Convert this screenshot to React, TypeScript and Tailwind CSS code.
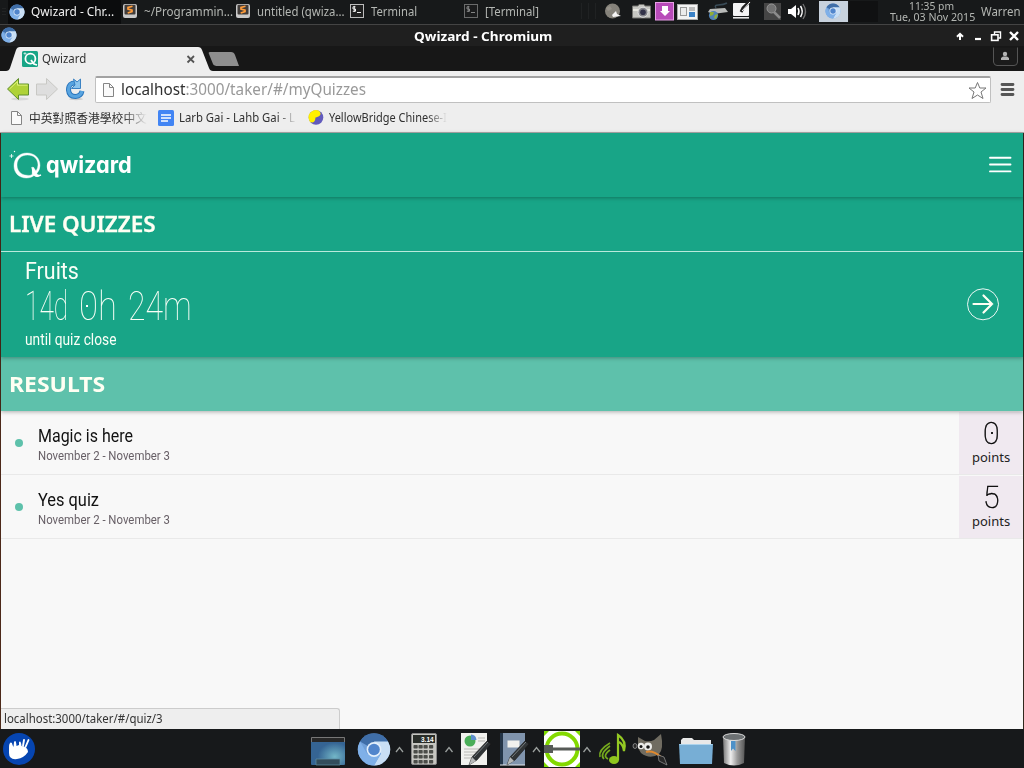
import { useLayoutEffect, useRef, type ReactNode } from "react";

/* One line of text, condensed or widened to fill its box. */
function Fit({ className = "", children }: { className?: string; children: ReactNode }) {
  const box = useRef<HTMLDivElement>(null);
  const ink = useRef<HTMLSpanElement>(null);
  useLayoutEffect(() => {
    if (!box.current || !ink.current) return;
    ink.current.style.transform = `scaleX(${box.current.clientWidth / ink.current.offsetWidth})`;
  });
  return (
    <div ref={box} className={"shrink-0 whitespace-nowrap " + className}>
      <span ref={ink} className="inline-block origin-left">{children}</span>
    </div>
  );
}

function Pic({ x, y, w, h, children }: { x: number; y: number; w: number; h: number; children?: ReactNode }) {
  return (
    <svg className="block shrink-0" width={w} height={h} viewBox={`${x} ${y} ${w} ${h}`} fill="none">
      {children}
    </svg>
  );
}

function Chromium({ cx, cy, r }: { cx: number; cy: number; r: number }) {
  return (
    <g transform={`translate(${cx} ${cy}) scale(${r / 16})`}>
      <circle r="16" fill="#6f9fd8" />
      <path d="M0 0L-14-8A16 16 0 0 1 14-8Z" fill="#3f6ea8" />
      <path d="M0-8H14A16 16 0 0 1 0 16L7 4Z" fill="#c9dff5" />
      <path d="M-14-8A16 16 0 0 0 0 16L7 4L-7 4Z" fill="#7fb0e8" />
      <circle r="7.4" fill="#e3effb" />
      <circle r="5.8" fill="#5085cc" />
    </g>
  );
}

function Sublime({ x }: { x: number }) {
  return (
    <g>
      <rect x={x} y="4" width="14" height="14" rx="2" fill="#c9c9c9" />
      <rect x={x + 1.5} y="4.8" width="11" height="9.7" rx="1" fill="#413c39" />
      <path d={`M${x + 9.5} 6.3L${x + 5} 7.5V9L${x + 9} 10.2V11.6L${x + 4.7} 13`} stroke="#ff9d3c" strokeWidth="1.7" />
    </g>
  );
}

function Term({ x, dim }: { x: number; dim?: boolean }) {
  return (
    <g opacity={dim ? 0.5 : 1}>
      <rect x={x + 0.5} y="4.5" width="13" height="13" fill="#202020" stroke="#bcbcbc" />
      <path d={`M${x + 5.5} 6.8H${x + 3}V9H${x + 5.5}V11.3H${x + 2.8}M${x + 4.3} 5.9V12M${x + 7} 12.5H${x + 11}`} stroke="#eee" />
    </g>
  );
}

function Page({ x, y }: { x: number; y: number }) {
  return (
    <g transform={`translate(${x} ${y})`}>
      <path d="M.5.5H6.5L10.5 4.5V13.5H.5Z" fill="#fafafa" stroke="#858585" />
      <path d="M6.5.5V4.5H10.5" stroke="#858585" />
    </g>
  );
}

const Caret = ({ x }: { x: number }) => <path d={`M${x} 752L${x + 3.5} 747.5L${x + 7} 752`} stroke="#9ba09e" strokeWidth="1.3" />;

function Pen({ x }: { x: number }) {
  return (
    <g transform={`translate(${x} 0)`}>
      <path d="M8 765L11 757L26 741L30 744L16 760Z" fill="#303436" stroke="#171717" strokeWidth=".6" />
      <path d="M8 765L11 757L15 761Z" fill="#b6b8b8" />
      <path d="M13 757L27 742" stroke="#777d80" />
    </g>
  );
}

function TopPanel() {
  const label = "text-[12px] leading-[24px] text-[#b4b7b3] ";
  return (
    <div className="flex h-[24px] bg-[#17191a]">
      <div className="flex w-[121px] bg-[#0b0c0d]">
        <Pic x={0} y={0} w={31} h={24}>
          <rect width="8" height="24" fill="#17191a" />
          <path d="M3 8V17M5 8V17" stroke="#2c2e2f" strokeDasharray="1 2" />
          <Chromium cx={17} cy={12} r={7.5} />
        </Pic>
        <Fit className="w-[83px] text-[12px] leading-[24px] text-[#f2f2f2]">Qwizard - Chr...</Fit>
      </div>
      <Pic x={121} y={0} w={23} h={24}><Sublime x={123} /></Pic>
      <Fit className={label + "w-[89px]"}>~/Programmin...</Fit>
      <Pic x={233} y={0} w={24} h={24}><Sublime x={236} /></Pic>
      <Fit className={label + "w-[88px]"}>untitled (qwiza...</Fit>
      <Pic x={345} y={0} w={26} h={24}><Term x={350} /></Pic>
      <Fit className={label + "w-[46px]"}>Terminal</Fit>
      <Pic x={417} y={0} w={68} h={24}><Term x={464} dim /></Pic>
      <Fit className={label + "w-[54px]"}>[Terminal]</Fit>
      <Pic x={539} y={0} w={350} h={24}>
        <path d="M581.5 3V19M588.5 3V19M595.5 3V19" stroke="#202223" />
        <circle cx="612.5" cy="11" r="7.5" fill="#85827a" />
        <path d="M606 8L610 6L612 9L608 11Z" fill="#96928a" />
        <path d="M612 15L616 11L617 14L621 16L613 17Z" fill="#f5f5f5" />
        <path d="M632.5 6H638L639 4.5H644L645 6H650.5V18H632.5Z" fill="#c6c6c1" stroke="#73736f" />
        <path d="M633 10H650" stroke="#e7e7df" strokeWidth="2" />
        <circle cx="643" cy="12.2" r="5" fill="#85868b" stroke="#e1e1e1" />
        <circle cx="643" cy="12.2" r="2.8" fill="#333349" />
        <rect x="655.5" y="2.5" width="18" height="17.5" fill="#b84bb9" stroke="#e7a0e5" />
        <path d="M662 6H668V11H670L665 16L660 11H662Z" fill="white" />
        <rect x="677.5" y="4.5" width="20" height="15" fill="#f3f3f3" stroke="#aaa" />
        <path d="M680 7H687V16H680Z" fill="#999" />
        <path d="M681 8H686V15H681Z" fill="#ececec" />
        <path d="M689 7H695V11H689Z" fill="#bbb" />
        <path d="M689 12H695V17H689Z" fill="#3b82c7" />
        <path d="M716 8C713 3 720 7 727 3" stroke="#394b56" strokeWidth="1.5" />
        <path d="M710 9L725 8L728 12L713 14L708 12Z" fill="#b8bab8" />
        <circle cx="713.5" cy="15.5" r="4.6" fill="#5082b5" />
        <path d="M710 12L714 12L713 15L710 16ZM715 15L718 14L716 19L714 18Z" fill="#91ae35" />
        <rect x="733" y="3" width="16" height="13" rx="1" fill="#f4f4f4" />
        <path d="M733 17.8H749" stroke="#f4f4f4" strokeWidth="1.5" />
        <path d="M741 12L743 8L750 1" stroke="#202020" strokeWidth="3" />
        <path d="M742 11L750 2" stroke="#fafafa" />
        <rect x="764" y="3" width="17" height="17" fill="#454545" />
        <circle cx="771.5" cy="8.5" r="4.5" fill="#727272" stroke="#969696" />
        <path d="M774 12L780 18" stroke="#8b8b8b" strokeWidth="2.5" />
        <path d="M788 9H791L796 5V18L791 14H788Z" fill="white" />
        <path d="M798 8Q800 11.5 798 15M800.5 6Q804 11.5 800.5 17" stroke="white" strokeWidth="1.5" />
        <path d="M803 4Q808 11.5 803 19" stroke="#737373" strokeWidth="1.3" />
        <rect x="819" y="1" width="29" height="21" fill="#c8d2dd" />
        <rect x="849" y="1" width="29" height="21" fill="#101112" />
        <Chromium cx={833} cy={11} r={7.5} />
      </Pic>
      <div className="flex w-[92px] flex-col items-start">
        <Fit className="ml-[20px] h-[10px] w-[45px] text-[11px] leading-[12px] text-[#b4b7b3]">11:35 pm</Fit>
        <Fit className="ml-px h-[12px] w-[85px] text-[11px] leading-[13px] text-[#b4b7b3]">Tue, 03 Nov 2015</Fit>
      </div>
      <Fit className={label + "w-[40px]"}>Warren</Fit>
    </div>
  );
}

function BrowserChrome() {
  return (
    <>
      <div className="flex h-[22px] border-t border-[#444] bg-[#1f1f1f]">
        <Pic x={0} y={25} w={414} h={22}><Chromium cx={9} cy={35} r={7.5} /></Pic>
        <Fit className="w-[138px] text-[13px] font-bold leading-[22px] text-white">Qwizard - Chromium</Fit>
        <Pic x={552} y={25} w={472} h={22}>
          <path d="M960 40V34M957 36.8L960 33.8L963 36.8" stroke="white" strokeWidth="2" />
          <path d="M975 39H981" stroke="white" strokeWidth="2.2" />
          <path d="M994.5 34V32H1000.5V38H998.5" stroke="white" strokeWidth="1.4" />
          <rect x="991.6" y="34.8" width="6.4" height="5.6" stroke="white" strokeWidth="1.6" />
          <path d="M1010 32L1018 40M1018 32L1010 40" stroke="white" strokeWidth="2.4" />
        </Pic>
      </div>
      <div className="flex h-[25px] bg-[#171717]">
        <Pic x={0} y={46} w={42} h={25}>
          <path d="M1 71H6Q9 71 10 68L16 50Q17 47 20 47H42V71Z" fill="#eee" />
          <rect x="22" y="51" width="16" height="16" rx="1.5" fill="#17a586" />
          <circle cx="30.4" cy="58.7" r="5" stroke="white" strokeWidth="1.8" />
          <path d="M31 60L34 64L37 65" stroke="white" strokeWidth="1.8" />
          <path d="M25 52V55M23.5 53.5H26.5" stroke="white" strokeWidth=".6" />
        </Pic>
        <Fit className="mt-px h-[24px] w-[44px] bg-[#eee] text-[12px] leading-[24px] text-[#333]">Qwizard</Fit>
        <Pic x={86} y={46} w={938} h={25}>
          <path d="M86 47H198Q201 47 202 50L209 68Q210 71 213 71H86Z" fill="#eee" />
          <path d="M187.5 56L194 62.5M194 56L187.5 62.5" stroke="#555" strokeWidth="1.8" />
          <path d="M210 52H231Q234 52 235 55L239 66H218Q214 66 213 64L209 54Q208 52 210 52Z" fill="#8e8e8e" />
          <path d="M993.5 47.5V62Q994 65.5 997 65.5H1014Q1017.5 65.5 1017.5 62V47.5" fill="#1b1b1b" stroke="#555" />
          <circle cx="1005" cy="54" r="2.2" fill="#b5b5b5" />
          <path d="M1001 60V58L1003 56.5H1007L1009 58V60Z" fill="#b5b5b5" />
        </Pic>
      </div>
      <div className="flex h-[32px] items-center bg-[#eee] pt-[5px]">
        <Pic x={0} y={76} w={95} h={27}>
          <ellipse cx="20" cy="99" rx="9" ry="1.5" fill="#d8d8d8" />
          <path d="M7.5 89L18.5 78.5V84H28.5V95H18.5V99.5Z" fill="#afd238" stroke="#61902e" />
          <path d="M9.5 89L17.5 81.5V85.2H27.5" stroke="#dcf07c" />
          <path d="M57.5 89L46.5 78.5V84H36.5V95H46.5V99.5Z" fill="#dedede" stroke="#c8c8c4" />
          <ellipse cx="76" cy="99" rx="7" ry="1.2" fill="#ccc" />
          <path d="M76 83Q68.5 82.5 68.5 90Q69 96.5 75.5 96.5Q81 96 82 91" stroke="#2874bb" strokeWidth="5" />
          <path d="M76 83Q68.5 82.5 68.5 90Q69 96.5 75.5 96.5Q81 96 82 91" stroke="#58a4e0" strokeWidth="3.2" />
          <path d="M73.5 79L77 82L80.5 79V88.5H71.5L75 85Z" fill="#8bc4ed" stroke="#2d78bd" strokeWidth=".9" />
        </Pic>
        <div className="flex h-[27px] w-[896px] items-center rounded-[2px] border border-t-2 border-[#c0c0c0] border-t-[#a2a2a2] bg-white">
          <Pic x={96} y={78} w={25} h={23}><Page x={103} y={82} /></Pic>
          <Fit className="w-[245px] text-[16px] leading-[21px] -mt-[2px] text-[#999]"><span className="text-[#303030]">localhost</span>:3000/taker/#/myQuizzes</Fit>
          <Pic x={366} y={78} w={623} h={23}>
            <path d="M977.5 81.5L979.8 87H986L981 91L983 97.5L977.5 94L972 97.5L974 91L969 87H975.2Z" stroke="#777" strokeLinejoin="round" />
          </Pic>
        </div>
        <Pic x={991} y={76} w={33} h={27}>
          <path d="M1002 84.5H1013M1002 89.5H1013M1002 94.5H1013" stroke="#555" strokeWidth="2.8" strokeLinecap="round" />
        </Pic>
      </div>
      <div className="flex h-[30px] items-start border-b border-[#aaa] bg-[#eee] text-[12px] leading-[29px] text-[#303030]">
        <Pic x={0} y={103} w={29} h={29}><Page x={11} y={111} /></Pic>
        <div className="w-[118px] overflow-hidden [mask-image:linear-gradient(to_right,black_80%,transparent)]">
          <Fit className="w-[118px] font-['Noto_Sans_CJK_TC','Noto_Sans_CJK_SC',sans-serif]">中英對照香港學校中文</Fit>
        </div>
        <Pic x={147} y={103} w={32} h={29}>
          <rect x="158" y="110" width="16" height="16" rx="1.5" fill="#4285f4" />
          <path d="M161 115H171M161 118H171M161 121H168" stroke="white" strokeWidth="1.4" />
        </Pic>
        <div className="w-[118px] [mask-image:linear-gradient(to_right,black_83%,transparent)]"><Fit className="w-[116px]">Larb Gai - Lahb Gai - L</Fit></div>
        <Pic x={297} y={103} w={32} h={29}>
          <circle cx="316" cy="117.5" r="7.3" fill="#625bbd" />
          <path d="M308.7 119A7.3 7.3 0 0 1 319 110.8C323 115 318.5 117 315.5 117.5Q315 124 310 122Z" fill="#fff000" />
        </Pic>
        <div className="w-[118px] [mask-image:linear-gradient(to_right,black_83%,transparent)]"><Fit className="w-[118px]">YellowBridge Chinese-I</Fit></div>
      </div>
    </>
  );
}

function Result({ title, points }: { title: string; points: string }) {
  return (
    <div className="flex h-[64px] border-b border-[#e9e9e9] font-['Roboto',sans-serif]">
      <div className="mt-[28px] ml-[14px] size-[8px] rounded-full bg-[#5ec1ab]" />
      <div className="ml-[15px] grow pt-[13px]">
        <Fit className={"h-[24px] text-[18px] leading-[23px] text-[#111] " + (title === "Yes quiz" ? "w-[61px]" : "w-[95px]")}>{title}</Fit>
        <Fit className="h-[16px] w-[132px] text-[12px] leading-[16px] text-[#675f66]">November 2 - November 3</Fit>
      </div>
      <div className="mt-px flex w-[64px] flex-col items-center bg-[#f0e9f0]">
        <div className="relative mt-[5px]">
          <Fit className="h-[32px] w-[17px] text-[32px] font-thin leading-[33px] text-black [-webkit-text-stroke:0.5px_black]">{points}</Fit>
          {points === "0" && <span className="absolute left-[8px] top-[15px] size-[2px] bg-[#222]" />}
        </div>
        <Fit className="h-[18px] w-[38px] font-['Noto_Sans',sans-serif] text-[13px] leading-[17px] text-[#222]">points</Fit>
      </div>
    </div>
  );
}

function Website() {
  return (
    <main className="flex h-[596px] flex-col border-x border-l-[#4c2919] border-r-[#30291e] bg-[#f8f8f8] text-white">
      <header className="z-10 flex h-[64px] shrink-0 items-start bg-[#18a587] shadow-[0_1px_4px_rgba(0,0,0,.3)]">
        <Pic x={1} y={133} w={45} h={64}>
          <path fillRule="evenodd" d="M27 153C19 153 14 158.5 14 166C14 173 19 178 26.5 178C30 178 32.5 176.7 34 175.5Q37 178 41 175Q38 175.5 36.7 173.5Q40 170 40 165.5C40 158 34.5 153 27 153ZM27.5 155C34 155 38 159 38 165Q38 168 36 171L33.3 167Q32 169 32.2 174.5Q30 176 27 175.3C21 175 17 171 17 165C17 159 21 155 27.5 155Z" fill="white" stroke="white" strokeWidth=".4" />
          <path d="M32 167L33.5 174Q36 178 41 175" stroke="white" strokeWidth="1.3" />
          <path d="M11.5 154V158M9.5 156H13.5" stroke="white" strokeWidth=".8" />
          <circle cx="14.5" cy="151.5" r=".7" fill="white" />
        </Pic>
        <Fit className="mt-[16px] h-[32px] w-[86px] font-['Inter',sans-serif] text-[23px] font-bold leading-[32px] [font-feature-settings:'cv11']">qwizard</Fit>
        <Pic x={132} y={133} w={891} h={64}>
          <path d="M990 157.7H1010.5M990 164.5H1010.5M990 171.4H1010.5" stroke="white" strokeWidth="1.9" strokeLinecap="round" />
        </Pic>
      </header>
      <section className="z-[5] h-[160px] shrink-0 bg-[#18a587] shadow-[0_1px_4px_rgba(0,0,0,.3)]">
        <div className="h-[55px] border-b border-[#b9eadc] pl-[8px]">
          <Fit className="w-[147px] text-[22px] font-semibold leading-[53px] text-[#fffff3] [-webkit-text-stroke:0.3px_#fffff3]">LIVE QUIZZES</Fit>
        </div>
        <div className="flex h-[105px] font-['Roboto',sans-serif] text-[#fafff7]">
          <div className="grow pl-[24px] pt-[5px]">
            <Fit className="h-[28px] w-[54px] text-[23px] leading-[29px]">Fruits</Fit>
            <div className="relative flex h-[43px] gap-[11px] text-[41px] font-thin leading-[43px]">
              <Fit className="w-[43px]">14d</Fit>
              <Fit className="w-[38px]">0h</Fit>
              <Fit className="w-[64px]">24m</Fit>
              <span className="absolute left-[61px] top-[20px] size-[2px] bg-white" />
            </div>
            <Fit className="h-[23px] w-[91px] text-[16px] leading-[23px]">until quiz close</Fit>
          </div>
          <Pic x={959} y={252} w={64} h={105}>
            <circle cx="983" cy="304.3" r="15.5" stroke="white" strokeWidth=".9" />
            <path d="M973.5 304H992M983.5 295.5L992 304L983.5 312.5" stroke="#fffff3" strokeWidth="2.2" strokeLinecap="round" />
          </Pic>
        </div>
      </section>
      <section className="z-[4] h-[54px] shrink-0 bg-[#5ec1ab] pl-[8px] shadow-[0_1px_4px_rgba(0,0,0,.3)]">
        <Fit className="w-[96px] text-[22px] font-bold leading-[53px] text-[#fffff3]">RESULTS</Fit>
      </section>
      <section className="grow">
        <Result title="Magic is here" points="0" />
        <Result title="Yes quiz" points="5" />
      </section>
      <div className="h-[21px] w-[339px] rounded-tr-[3px] border-r border-t border-[#ccc] bg-[#eee] pl-[3px]">
        <Fit className="w-[159px] text-[12px] leading-[19px] text-[#333]">localhost:3000/taker/#/quiz/3</Fit>
      </div>
    </main>
  );
}

function Dock() {
  return (
    <footer className="flex h-[39px] bg-[#17191b]">
      <Pic x={0} y={729} w={311} h={39}>
        <circle cx="19" cy="749" r="16" fill="#0645b1" />
        <path d="M9 747C9 742 12 741 12.5 745L13.5 747L14 742Q16 739 16.5 746L19 745L19 742Q21 740 21.5 746Q28 747 28 752Q24 758 17 759Q9 760 9 753Z" fill="white" />
        <path d="M23 746L24 740M25.5 747L28.5 740" stroke="white" strokeWidth="1.9" strokeLinecap="round" />
      </Pic>
      <Pic x={311} y={729} w={95} h={39}>
        <defs>
          <radialGradient id="desktop" cx=".7" cy=".7"><stop stopColor="#73b6c7" /><stop offset="1" stopColor="#356493" /></radialGradient>
        </defs>
        <rect x="311" y="737" width="34" height="28" rx="1" fill="url(#desktop)" />
        <path d="M311 737H345V742H311Z" fill="#272727" />
        <path d="M311.5 742V737.5H344.5V742" stroke="#777" />
        <path d="M316 765V759H340V765Z" fill="#344d5c" stroke="#5e8fa4" strokeWidth=".7" />
        <Chromium cx={374} cy={749.5} r={16} />
        <Caret x={396} />
      </Pic>
      <Pic x={406} y={729} w={51} h={39}>
        <rect x="411.5" y="733.5" width="25" height="31" rx="1.5" fill="#c6c6c1" stroke="#888" />
        <rect x="413" y="735" width="22" height="8" fill="#292d29" />
        <text x="421" y="741.5" fill="white" fontSize="6.5" fontWeight="bold" fontFamily="Liberation Sans">3.14</text>
        {[745, 750, 755, 760].map((y) => [413.5, 418.5, 423.5, 429].map((x) => (
          <rect key={`${x}${y}`} x={x} y={y} width="4.2" height="3.5" rx=".7" fill="#4b4d49" />
        )))}
        <Caret x={445.5} />
      </Pic>
      <Pic x={457} y={729} w={87} h={39}>
        <path d="M461 733H487V765H461Z" fill="#f1f1ee" />
        <circle cx="470" cy="741" r="5.5" fill="#4aae58" />
        <path d="M471 740V734.5A6 6 0 0 1 476.5 740Z" fill="#5e8fcc" />
        <path d="M478 738H485M478 741H485M464 749H484M464 752H482M464 755H478M464 758H475" stroke="#b9b9b5" />
        <Pen x={461} />
        <path d="M500 733H525V765H500Z" fill="#8094ad" />
        <path d="M500 733H503V765H500Z" fill="#243548" />
        <path d="M500 765H525" stroke="#e7ebef" />
        <rect x="507.5" y="740.5" width="12" height="7" fill="#f1f1ee" />
        <Pen x={499} />
        <Caret x={533} />
      </Pic>
      <Pic x={544} y={729} w={50} h={39}>
        <rect x="544" y="731" width="36" height="36" fill="white" />
        <path d="M544 731H549L544 736ZM575 731H580V736ZM544 762V767H549ZM580 762V767H575Z" fill="#7fdc00" />
        <circle cx="562" cy="749" r="15.5" stroke="#83d900" strokeWidth="4" />
        <path d="M544 745H553V747.5H580V750.5H553V753H544Z" fill="#565a57" />
        <Caret x={583.5} />
      </Pic>
      <Pic x={594} y={729} w={78} h={39}>
        <ellipse cx="614" cy="760" rx="5" ry="4" fill="#8fc51e" />
        <path d="M618 760V735Q627 741 624 751Q623 744 619 742" stroke="#94c923" strokeWidth="2.2" />
        <path d="M608 759Q602 756 610 750M604 759Q599 754 610 746M600 757Q598 750 610 743" stroke="#75a91d" strokeWidth="1.7" />
        <path d="M638 737L645 741Q650 742 654 740L661 734Q664 749 659 754Q650 760 641 753L638 748Z" fill="#706c61" />
        <circle cx="641" cy="746" r="3.2" fill="#ececea" /><circle cx="648" cy="746.5" r="4" fill="#ececea" />
        <circle cx="641" cy="746.5" r="1.5" fill="#151515" /><circle cx="648" cy="747" r="1.8" fill="#151515" />
        <ellipse cx="635" cy="746" rx="2" ry="2.5" fill="#292929" stroke="#ddd" strokeWidth=".5" />
        <path d="M646 752Q653 750 661 757" stroke="#e28a2e" strokeWidth="2" />
        <path d="M658 755L664 757L667 765L659 761Z" fill="#282828" stroke="#999" strokeWidth=".7" />
      </Pic>
      <Pic x={672} y={729} w={352} h={39}>
        <defs><linearGradient id="bin"><stop stopColor="#777" /><stop offset=".35" stopColor="#eee" /><stop offset=".65" stopColor="#999" /><stop offset="1" stopColor="#555" /></linearGradient></defs>
        <path d="M681 740L683 738H692L694 740H711V746H681Z" fill="#e8e8e8" />
        <path d="M679 744H713L712 764H680Z" fill="#77aed5" />
        <path d="M679.5 744.5H712.5" stroke="#acd3ed" />
        <path d="M723 737H745L744 763Q734 768 724 763Z" fill="url(#bin)" />
        <ellipse cx="734" cy="737" rx="11" ry="3.5" fill="#6d7173" stroke="#dbdbdb" />
        <path d="M731 741H735.5V751L733 748.5L731 751Z" fill="#4e91c8" />
      </Pic>
    </footer>
  );
}

export default function App() {
  return (
    <div className="h-[768px] w-[1024px] overflow-hidden bg-[#17191a] font-['Noto_Sans','Noto_Sans_CJK_TC',sans-serif]">
      <TopPanel />
      <BrowserChrome />
      <Website />
      <Dock />
    </div>
  );
}
